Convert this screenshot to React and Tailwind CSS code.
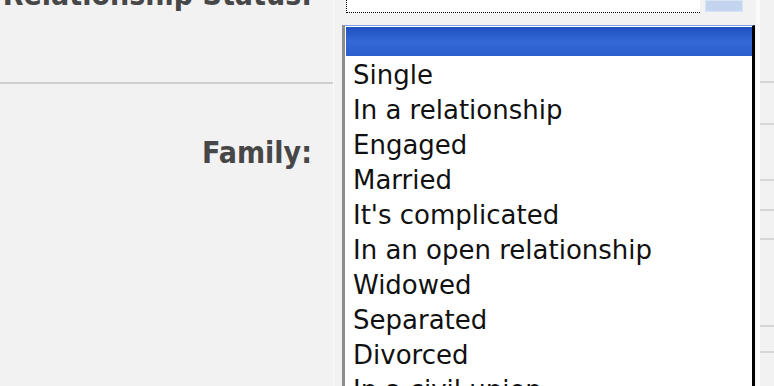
import React from 'react';

const options = [
  'Single',
  'In a relationship',
  'Engaged',
  'Married',
  "It's complicated",
  'In an open relationship',
  'Widowed',
  'Separated',
  'Divorced',
  'In a civil union',
];

const labelFont = { fontFamily: "Tahoma, 'DejaVu Sans Condensed', 'DejaVu Sans', sans-serif" };
const listFont = { fontFamily: "Tahoma, 'DejaVu Sans', Verdana, sans-serif" };

const App = () => {
  return (
    <div className="relative w-[774px] h-[386px] overflow-hidden bg-[#f2f2f2] flex">
      {/* Form labels */}
      <div className="w-[334px] shrink-0 flex flex-col border-r border-[#fafafa]">
        <div className="h-[84px] border-b-2 border-[#cfcfcf] flex justify-end pr-[21px]">
          <span
            style={labelFont}
            className="-mt-[23px] text-[30px] leading-[36px] font-bold text-[#474747] whitespace-nowrap"
          >
            Relationship Status:
          </span>
        </div>
        <div className="flex justify-end pr-[21px] pt-[51px]">
          <span style={labelFont} className="text-[30px] leading-[36px] font-bold text-[#474747]">
            Family:
          </span>
        </div>
      </div>

      {/* Select column */}
      <div className="w-[422px] shrink-0 flex flex-col">
        <div className="h-[14px] flex items-start pl-[12px]">
          <div className="w-[354px] h-[13px] bg-white border-l border-b border-dotted border-black"></div>
          <div className="ml-[5px] w-[38px] h-[12px] bg-[#c3d4ef] border border-[#d8e3f5]"></div>
        </div>
      </div>

      {/* Right side of page */}
      <div className="flex-1 flex flex-col border-l-4 border-[#fbfbfb]">
        <div className="h-[83px] border-b-2 border-[#d6d6d6]"></div>
        <div className="h-[42px] border-b-2 border-[#d6d6d6]"></div>
        <div className="h-[56px] border-b-2 border-[#d6d6d6]"></div>
        <div className="h-[30px] border-b-2 border-[#d6d6d6]"></div>
        <div className="h-[29px] border-b-2 border-[#d6d6d6]"></div>
        <div className="h-[87px] border-b-2 border-[#d6d6d6]"></div>
        <div className="h-[26px] border-b-2 border-[#d6d6d6]"></div>
      </div>

      {/* Open dropdown list */}
      <div className="absolute left-[342px] top-[25px] w-[413px] h-[380px] bg-white border-l-[3px] border-l-[#8d8d8d] border-r-[3px] border-r-black border-t border-t-[#7a9ce0]">
        <div className="h-[29px] mt-[1px] ml-[1px] bg-gradient-to-b from-[#1f50c0] via-[#3468d6] to-[#2b5fcf]"></div>
        <ul style={listFont} className="pt-[2px] text-[26px] leading-[35px] text-[#111]">
          {options.map((o) => (
            <li key={o} className="pl-[8px] h-[35px] whitespace-nowrap">
              {o}
            </li>
          ))}
        </ul>
      </div>
    </div>
  );
};

export default App;
